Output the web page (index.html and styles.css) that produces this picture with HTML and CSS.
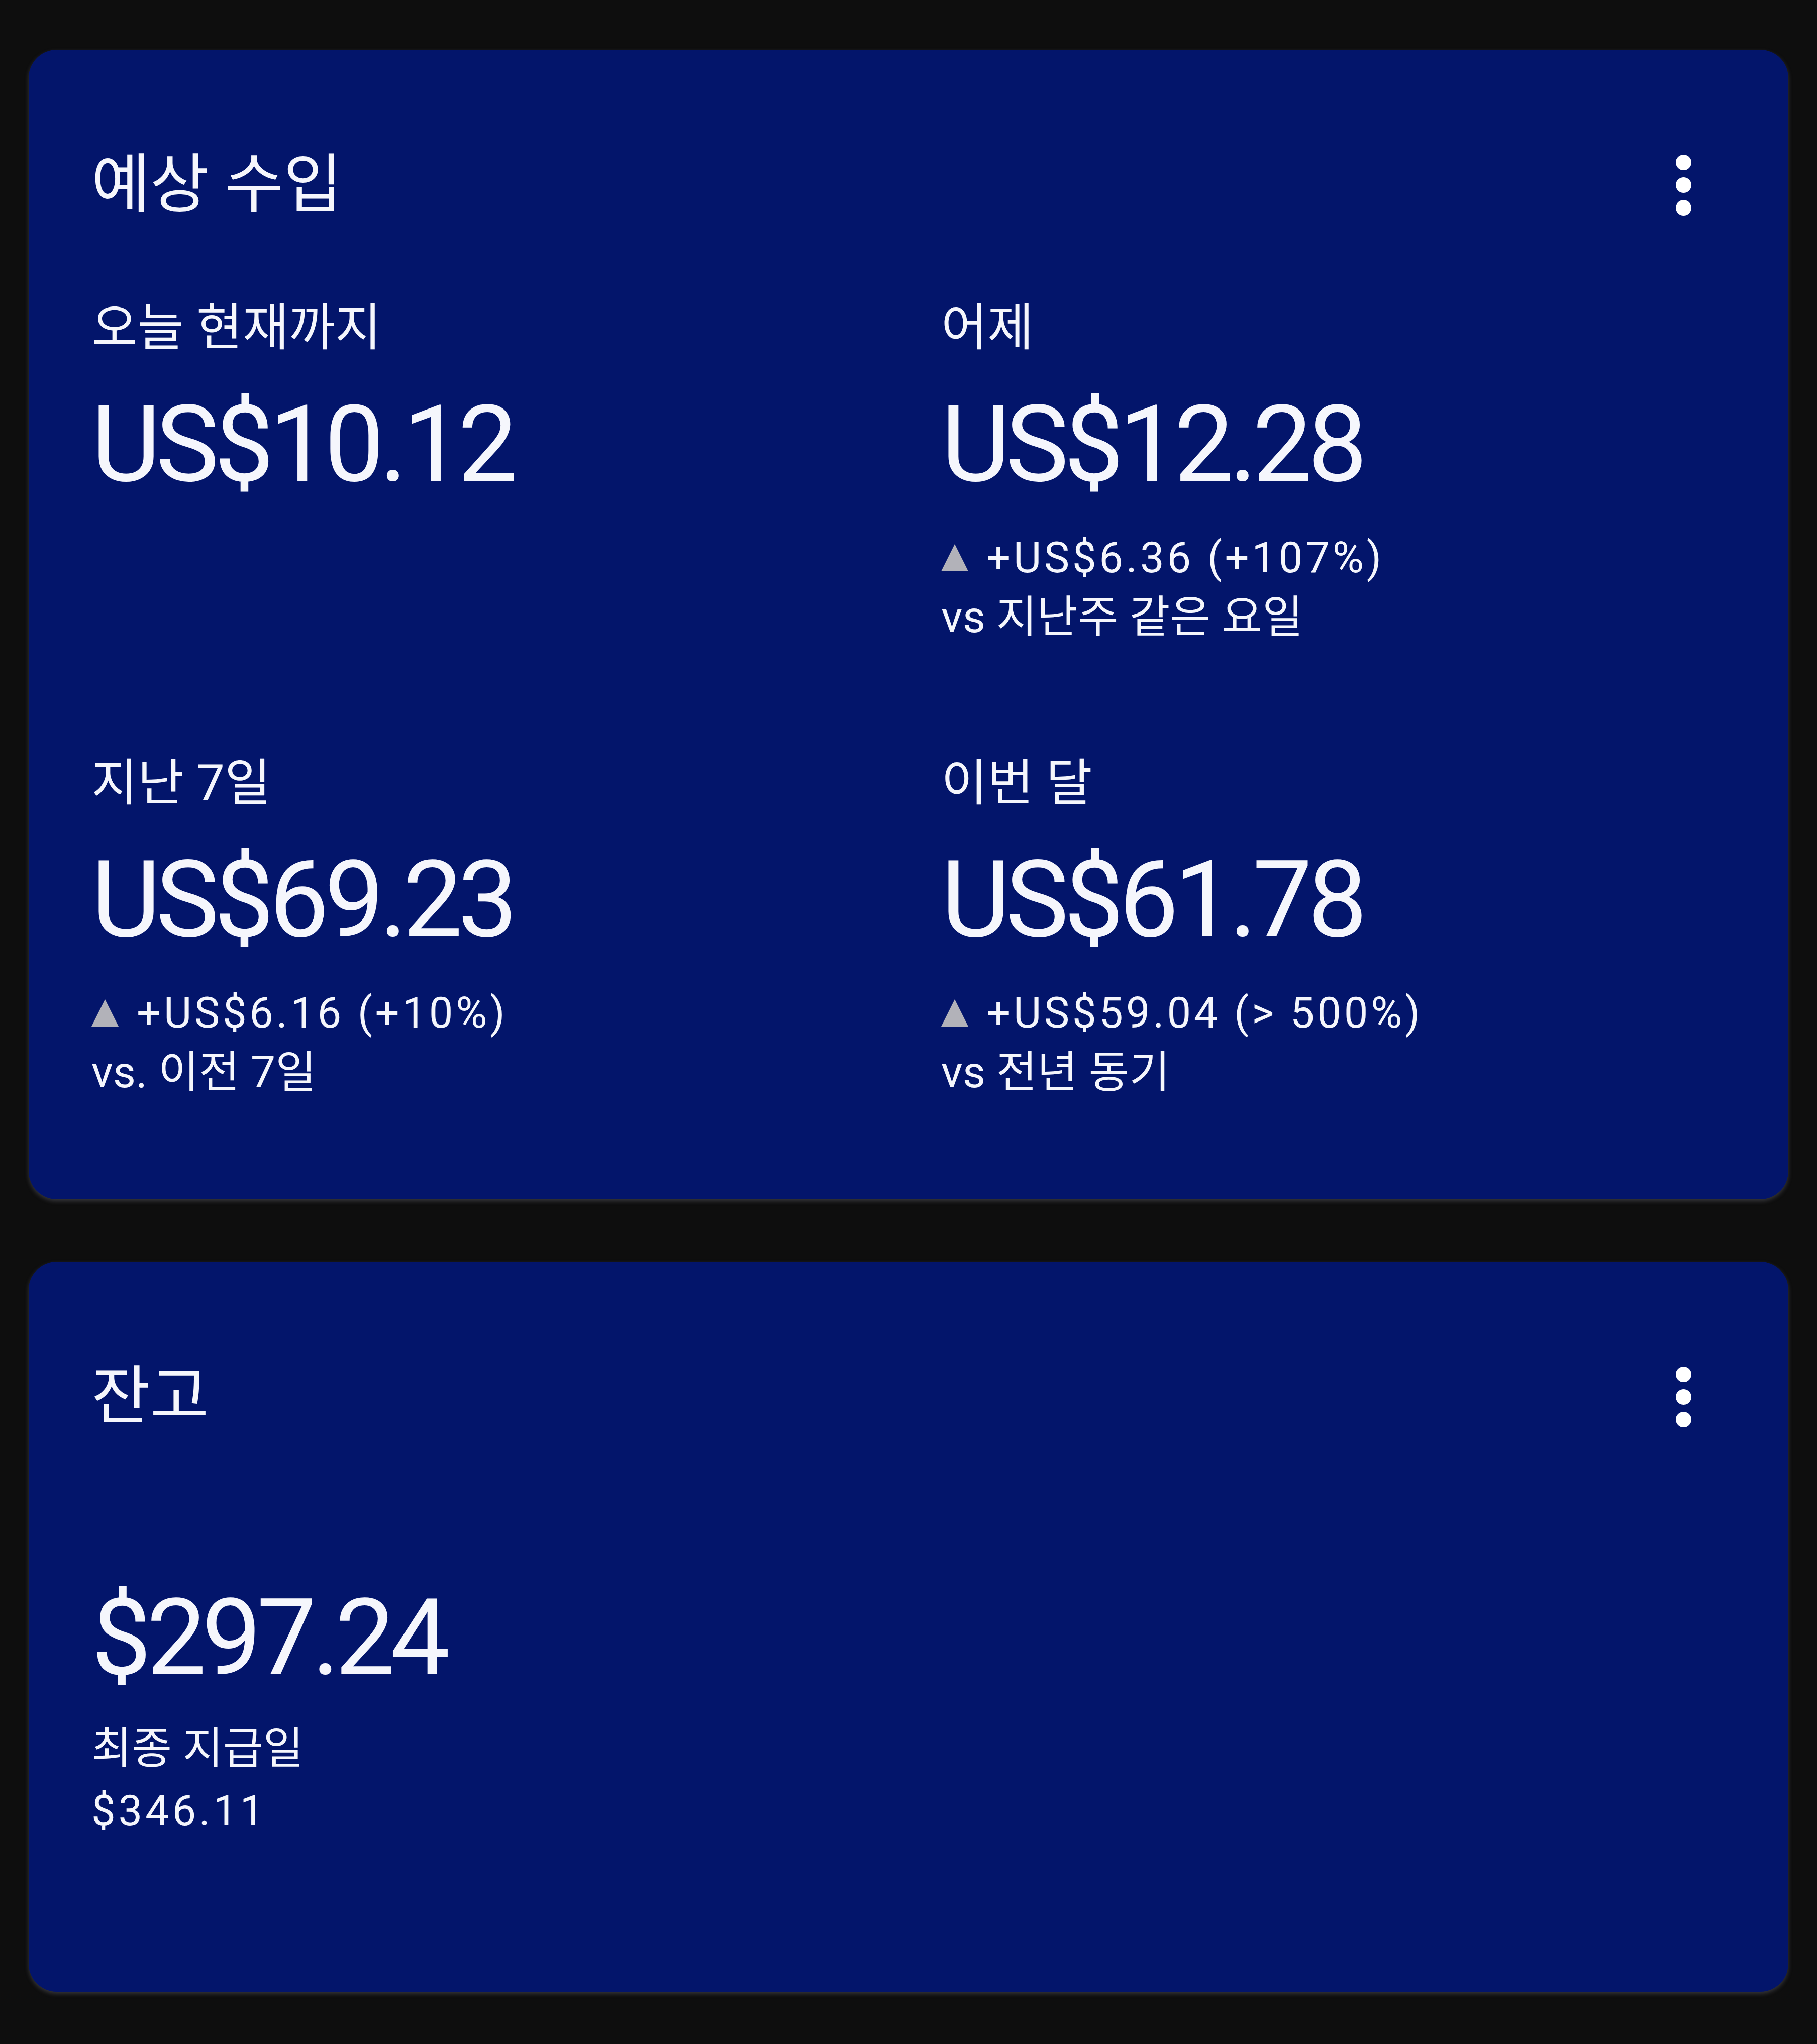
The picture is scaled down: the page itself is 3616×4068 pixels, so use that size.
FILE: index.html
```html
<!DOCTYPE html>
<html lang="ko">
<head>
<meta charset="UTF-8">
<meta name="viewport" content="width=device-width, initial-scale=1.0">
<title>수입</title>
<link rel="stylesheet" href="styles.css">
</head>
<body>

<div class="page">

  <div class="card earnings">
    <div class="card-header">
      <h2>예상 수입</h2>
      <button class="more" aria-label="더보기">
        <svg viewBox="0 0 31 121" width="31" height="121"><circle cx="15.5" cy="15.5" r="15.5"/><circle cx="15.5" cy="60.5" r="15.5"/><circle cx="15.5" cy="105.5" r="15.5"/></svg>
      </button>
    </div>

    <div class="stats">
      <div class="stat">
        <div class="label">오늘 현재까지</div>
        <div class="amount">US$10.12</div>
      </div>
      <div class="stat">
        <div class="label">어제</div>
        <div class="amount">US$12.28</div>
        <div class="change"><svg class="up" viewBox="0 0 54 54"><polygon points="27,0 54,54 0,54"/></svg>+US$6.36 (+107%)</div>
        <div class="compare">vs 지난주 같은 요일</div>
      </div>
      <div class="stat">
        <div class="label">지난 7일</div>
        <div class="amount">US$69.23</div>
        <div class="change"><svg class="up" viewBox="0 0 54 54"><polygon points="27,0 54,54 0,54"/></svg>+US$6.16 (+10%)</div>
        <div class="compare">vs. 이전 7일</div>
      </div>
      <div class="stat">
        <div class="label">이번 달</div>
        <div class="amount">US$61.78</div>
        <div class="change"><svg class="up" viewBox="0 0 54 54"><polygon points="27,0 54,54 0,54"/></svg>+US$59.04 (&gt; 500%)</div>
        <div class="compare">vs 전년 동기</div>
      </div>
    </div>
  </div>

  <div class="card balance">
    <div class="card-header">
      <h2>잔고</h2>
      <button class="more" aria-label="더보기">
        <svg viewBox="0 0 31 121" width="31" height="121"><circle cx="15.5" cy="15.5" r="15.5"/><circle cx="15.5" cy="60.5" r="15.5"/><circle cx="15.5" cy="105.5" r="15.5"/></svg>
      </button>
    </div>
    <div class="amount">$297.24</div>
    <div class="payout">
      <div class="payout-label">최종 지급일</div>
      <div class="payout-value">$346.11</div>
    </div>
  </div>

</div>

</body>
</html>
```

FILE: styles.css
```css
body { margin: 0; background-color: #0e0e0e; color: #f5f6fc; font-family: Roboto, "Noto Sans CJK KR", sans-serif; }
.page { padding: 99px 57px; display: flex; flex-direction: column; gap: 124px; }

.card { background-color: #03156b; border-radius: 56px; padding: 199px 125px 194px; box-shadow: 0 4px 8px rgba(130,130,140,0.35); }
.card-header { display: flex; justify-content: space-between; align-items: center; height: 140px; }
.card-header h2 { margin: 0; font-size: 127px; font-weight: 400; line-height: 140px; }
.more { border: none; background: none; padding: 0; margin-right: 68px; width: 31px; height: 121px; cursor: pointer; }
.more svg { display: block; fill: #fff; }

.stats { display: grid; grid-template-columns: 1fr 1fr; column-gap: 130px; row-gap: 212px; margin-top: 155px; }
.label { font-size: 100px; line-height: 120px; }
.amount { font-size: 212px; line-height: 240px; letter-spacing: -0.045em; margin-top: 52px; }

.change { font-size: 85px; line-height: 118px; letter-spacing: 0.067em; margin-top: 46px; display: flex; align-items: center; }
.change .up { width: 54px; height: 54px; margin-right: 36px; fill: #b2b2b9; }
.compare { font-size: 88px; line-height: 118px; }

.balance { padding-bottom: 298px; }
.balance .amount { margin-top: 290px; }
.payout { margin-top: 38px; font-size: 87px; line-height: 124px; }
.payout-value { font-size: 85px; letter-spacing: 0.067em; }
```
